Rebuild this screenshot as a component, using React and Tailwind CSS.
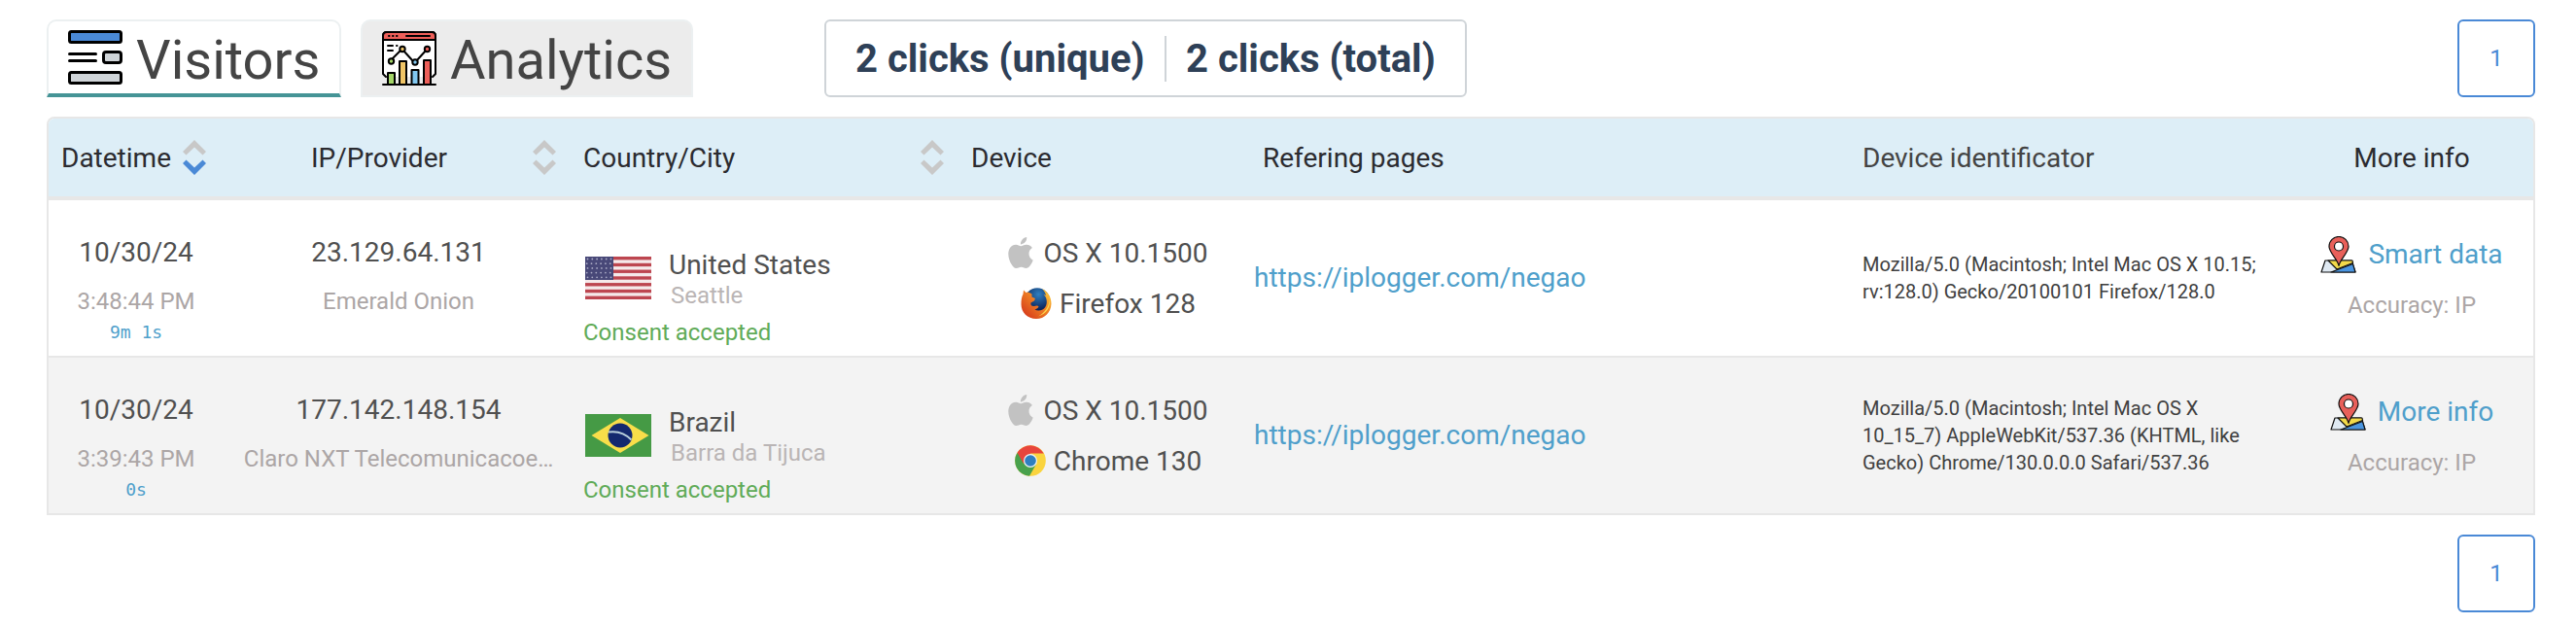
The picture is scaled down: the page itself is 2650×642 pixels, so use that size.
const ListIcon = () => (
  <svg className="h-14 w-14 shrink-0" viewBox="0 0 56 56" fill="none" stroke="#000" strokeWidth="3" strokeLinecap="round">
    <rect x="1.5" y="1.5" width="53" height="11" rx="2" fill="#4a89d6" />
    <rect x="36.5" y="22.5" width="18" height="11" rx="2.5" fill="#cfd4d8" />
    <path d="M1.5 24.500H28.500M1.500 31.500H28.500" />
    <rect x="1.500" y="43.500" width="53" height="11" rx="2" fill="#cfd4d8" />
  </svg>
);

const ChartIcon = () => (
  <svg className="h-14 w-14 shrink-0" viewBox="0 0 56 56" fill="none" stroke="#000" strokeWidth="2" strokeLinecap="round" strokeLinejoin="round">
    <path d="M4 47L1 44V5Q1 1 5 1H51Q55 1 55 5V44L52 47" fill="#fff" />
    <path d="M1 9V5Q1 1 5 1H51Q55 1 55 5V9Z" fill="#ed5f59" />
    <path d="M7 5H7.500M11 5H11.500M15 5H15.500M25 5H49" />
    <path d="M6 15H11M15 15H15.500M6 20H11" />
    <path d="M10 29L20 19M22 20L32 31M35 31L46 19" />
    <circle cx="9.500" cy="31" r="2.700" fill="#a4d668" />
    <circle cx="21" cy="18.500" r="2.700" fill="#f0c566" />
    <circle cx="34" cy="32" r="2.700" fill="#82c8f0" />
    <circle cx="46.500" cy="18.500" r="2.700" fill="#ed5f59" />
    <path d="M6 55V43H13V55Z" fill="#a4d668" />
    <path d="M18 55V31H25V55Z" fill="#f0c566" />
    <path d="M30.500 55V40H37.500V55Z" fill="#82c8f0" />
    <path d="M43 55V30H50V55Z" fill="#ed5f59" />
    <path d="M1 55H55" />
  </svg>
);

const Sort = ({ active }) => (
  <svg className="h-9 w-6 shrink-0" viewBox="0 0 24 36">
    <path d="M12 0L24 12L20.500 15.500L12 7.500L3.500 15.500L0 12Z" fill="#c8c8c8" />
    <path d="M12 36L24 24L20.500 20.500L12 28.500L3.500 20.500L0 24Z" fill={active ? "#4a89d6" : "#c8c8c8"} />
  </svg>
);

const Apple = () => (
  <svg className="h-8 w-[26px] shrink-0" viewBox="2 0 20 24" preserveAspectRatio="none" fill="#c2c2c2">
    <path d="M12.152 6.896c-.948 0-2.415-1.078-3.960-1.040-2.040.027-3.910 1.183-4.961 3.014-2.117 3.675-.546 9.103 1.519 12.090 1.013 1.454 2.208 3.090 3.792 3.039 1.520-.065 2.090-.987 3.935-.987 1.831 0 2.350.987 3.960.948 1.637-.026 2.676-1.480 3.676-2.948 1.156-1.688 1.636-3.325 1.662-3.415-.039-.013-3.182-1.221-3.220-4.857-.026-3.040 2.480-4.494 2.597-4.559-1.429-2.090-3.623-2.324-4.390-2.376-2-.156-3.675 1.090-4.610 1.090zM15.530 3.830c.843-1.012 1.400-2.427 1.245-3.830-1.207.052-2.662.805-3.532 1.818-.780.896-1.454 2.338-1.273 3.714 1.338.104 2.715-.688 3.559-1.701" />
  </svg>
);

const Firefox = () => (
  <svg className="h-8 w-8 shrink-0" viewBox="0 0 32 32">
    <defs>
      <radialGradient id="globe" cx="55%" cy="25%" r="60%">
        <stop offset="0" stopColor="#2f7fc0" />
        <stop offset="1" stopColor="#0b2258" />
      </radialGradient>
      <linearGradient id="body" x1="1" y1="0.200" x2="0.200" y2="1">
        <stop offset="0" stopColor="#fbc63a" />
        <stop offset="0.400" stopColor="#f08424" />
        <stop offset="1" stopColor="#d63a1c" />
      </linearGradient>
    </defs>
    <circle cx="17" cy="13.500" r="13.200" fill="url(#globe)" />
    <path d="M22 1C28 4 31.500 9.500 31.500 16.500C31 26 24.500 32 16 32C7 32 0.500 25.500 0.500 17C0.500 13 1 9 2.500 6.500L3 2.500L5.500 5C7.500 4.500 9.500 5 11.500 6.500L11.500 9.500L15 11L14 13.500L10.500 15.500C10 18 11.500 19.500 14 19C15.500 18.500 17.500 18 18.500 19.500C17.500 21.500 16 22 14.500 22.500C17 24 20 23.800 22.500 22.500C26 20.500 27.500 16.500 26.500 12C26 9.500 24.800 8 23.500 6.500L26 8C25.500 5 24 3 22 1Z" fill="url(#body)" />
    <path d="M29.800 12C31 19 27 27 18 29.500C25 25.500 29 20 29.800 12Z" fill="#fcd84e" />
  </svg>
);

const Chrome = () => (
  <svg className="h-8 w-8 shrink-0" viewBox="0 0 32 32">
    <circle cx="16" cy="16" r="15.800" fill="#fad43e" />
    <path d="M16 16L2.300 8A15.800 15.800 0 0 0 15 31.800L22 19.500Z" fill="#48a14c" />
    <path d="M2.500 7.800A15.800 15.800 0 0 1 29.800 8.600H16L9 19Z" fill="#e8453c" />
    <circle cx="16" cy="16" r="7" fill="#f4f4f4" />
    <circle cx="16" cy="16" r="5.800" fill="#2f7fc0" />
  </svg>
);

const Pin = () => (
  <svg className="h-[38px] w-[37px] shrink-0" viewBox="0 0 37 38" stroke="#111" strokeWidth="1.200" strokeLinejoin="round">
    <path d="M5 25H32L36 37H1Z" fill="#dfe9f2" />
    <path d="M8 25H33L33.500 27.500L17 34Z" fill="#f2d94a" />
    <path d="M11 37L33.500 28.500L36 37Z" fill="#4a95e0" />
    <path d="M19 30.500C18 24 9 17 9 10.500A10 10 0 0 1 29 10.500C29 17 20 24 19 30.500Z" fill="#e8605a" />
    <circle cx="19" cy="10.500" r="4.500" fill="#fff" />
  </svg>
);

const FlagUS = () => (
  <svg className="h-11 w-[68px] shrink-0" viewBox="0 0 68 44">
    <rect width="68" height="44" fill="#f5e9ea" />
    {[0, 1, 2, 3, 4, 5, 6].map((i) => (
      <rect key={i} y={i * 6.770} width="68" height="3.380" fill="#bd4650" />
    ))}
    <rect width="29" height="24" fill="#484878" />
    {[0, 1, 2, 3, 4].map((r) =>
      [0, 1, 2, 3, 4, 5].map((c) => (
        <circle key={r + "-" + c} cx={2.500 + c * 4.800 - (r % 2) * 0.800} cy={2.500 + r * 4.700} r="0.900" fill="#a9a9c4" />
      ))
    )}
  </svg>
);

const FlagBR = () => (
  <svg className="h-11 w-[68px] shrink-0" viewBox="0 0 68 44">
    <rect width="68" height="44" fill="#459a45" />
    <path d="M36 4L65.500 22L36 40L6.500 22Z" fill="#f8de4a" />
    <circle cx="36" cy="22" r="12.500" fill="#14296f" />
    <path d="M24 18.500Q38 16.500 47.500 26.500" fill="none" stroke="#b9d0dc" strokeWidth="2" />
  </svg>
);

const COLS = "grid grid-cols-[180px_360px_360px_380px_586px_440px_250px]";

const ROWS = [
  {
    time: "3:48:44 PM", ago: "9m 1s", ip: "23.129.64.131", isp: "Emerald Onion",
    flag: <FlagUS />, country: "United States", city: "Seattle",
    icon: <Firefox />, browser: "Firefox 128",
    ua: ["Mozilla/5.0 (Macintosh; Intel Mac OS X 10.15;", "rv:128.0) Gecko/20100101 Firefox/128.0"],
    more: "Smart data", bg: "bg-white",
  },
  {
    time: "3:39:43 PM", ago: "0s", ip: "177.142.148.154", isp: "Claro NXT Telecomunicacoe…",
    flag: <FlagBR />, country: "Brazil", city: "Barra da Tijuca",
    icon: <Chrome />, browser: "Chrome 130",
    ua: ["Mozilla/5.0 (Macintosh; Intel Mac OS X", "10_15_7) AppleWebKit/537.36 (KHTML, like", "Gecko) Chrome/130.0.0.0 Safari/537.36"],
    more: "More info", bg: "bg-[#f3f3f3]",
  },
];

const Row = ({ r }) => (
  <div className={COLS + " h-[162px] border-b-2 border-[#e7e7e7] text-[28px] leading-8 text-[#505050] " + r.bg}>
    <div className="flex flex-col items-center pt-[38px]">
      <div>10/30/24</div>
      <div className="mt-5 text-2xl leading-7 text-[#aca6a6]">{r.time}</div>
      <div className="mt-1.5 font-['DejaVu_Sans_Mono',monospace] text-lg leading-6 text-[#4f9fcb]">{r.ago}</div>
    </div>
    <div className="flex flex-col items-center pt-[38px]">
      <div>{r.ip}</div>
      <div className="mt-5 text-2xl leading-7 whitespace-nowrap text-[#aca6a6]">{r.isp}</div>
    </div>
    <div className="pt-[51px] pl-2.5">
      <div className="flex pl-0.5">
        <div className="pt-[7px]">{r.flag}</div>
        <div className="pl-[18px]">
          <div>{r.country}</div>
          <div className="mt-px pl-0.5 text-2xl leading-7 text-[#bab5b5]">{r.city}</div>
        </div>
      </div>
      <div className="mt-2.5 text-2xl leading-7 whitespace-nowrap text-[#60ab58]">Consent accepted</div>
    </div>
    <div className="flex flex-col items-center pt-[38px]">
      <div className="flex h-8 gap-2.5"><Apple /><span className="pt-px">OS X 10.1500</span></div>
      <div className="mt-5 flex h-8 gap-2">{r.icon}<span className="pt-px">{r.browser}</span></div>
    </div>
    <div className="flex items-center pb-px text-[#4f9fcb]"><span className="-ml-10">https://iplogger.com/negao</span></div>
    <div className="flex flex-col justify-center text-xl leading-7 text-[#404040]">
      {r.ua.map((l) => <div key={l} className="whitespace-nowrap">{l}</div>)}
    </div>
    <div className="flex flex-col items-center pt-[37px]">
      <div className="flex gap-3 text-[#4f9fcb]"><Pin /><span className="pt-[3px]">{r.more}</span></div>
      <div className="mt-[19px] text-2xl leading-7 text-[#aca6a6]">Accuracy: IP</div>
    </div>
  </div>
);

const Page = () => (
  <div className="flex h-20 w-20 items-center justify-center rounded-md border-2 border-[#4a89d6] text-2xl text-[#4a89d6]">1</div>
);

export default function App() {
  return (
    <div className="h-[642px] w-[2650px] bg-white px-12 pt-5 font-['Roboto',sans-serif]">
      <div className="flex w-[2560px] items-start">
        <div className="flex h-20 w-[303px] rounded-t-[10px] border-2 border-b-4 border-[#ecf0f1] border-b-[#459496] pt-[9px] pl-5 text-[56px] leading-[64px] text-[#444]">
          <ListIcon />
          <span className="-mt-px ml-3.5">Visitors</span>
        </div>
        <div className="ml-5 flex h-20 w-[342px] rounded-t-[10px] border-2 border-[#ecf0f1] bg-[#ececec] pt-2.5 pl-5 text-[56px] leading-[64px] text-[#444]">
          <ChartIcon />
          <span className="-mt-0.5 ml-3.5">Analytics</span>
        </div>
        <div className="ml-[135px] flex h-20 w-[661px] items-center rounded-md border-2 border-[#cfd4d8] pt-px pl-[30px] text-[40px] font-bold whitespace-nowrap text-[#2e4057]">
          <span className="w-[318px]">2 clicks (unique)</span>
          <span className="h-[47px] w-0.5 bg-[#cfd4d8]" />
          <span className="ml-5">2 clicks (total)</span>
        </div>
        <div className="ml-auto"><Page /></div>
      </div>

      <div className="mt-5 w-[2560px] rounded-t-lg border-2 border-b-0 border-[#e7e7e7]">
        <div className={COLS + " h-[84px] items-center rounded-t-md border-b-4 border-[#e7e7e7] bg-[#ddeef7] text-[28px] text-[#2b2b30]"}>
          <div className="flex items-center pl-[13px]">
            <span className="w-[125px] pt-0.5">Datetime</span><Sort active />
          </div>
          <div className="flex items-center pl-[90px]">
            <span className="w-[228px] pt-0.5">IP/Provider</span><Sort />
          </div>
          <div className="flex items-center pl-2.5">
            <span className="w-[347px] shrink-0 pt-0.5">Country/City</span><Sort />
          </div>
          <div className="pt-0.5 pl-[49px]">Device</div>
          <div className="-ml-[31px] pt-0.5">Refering pages</div>
          <div className="pt-0.5 text-[#444]">Device identificator</div>
          <div className="pt-0.5 text-center">More info</div>
        </div>
        {ROWS.map((r) => <Row key={r.ip} r={r} />)}
      </div>

      <div className="mt-5 flex w-[2560px] justify-end"><Page /></div>
    </div>
  );
}
